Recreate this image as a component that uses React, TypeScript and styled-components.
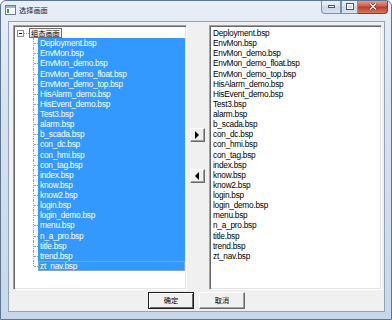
import React from "react";
import styled, { createGlobalStyle } from "styled-components";

const ROW = 10.13;

const files = [
  "Deployment.bsp",
  "EnvMon.bsp",
  "EnvMon_demo.bsp",
  "EnvMon_demo_float.bsp",
  "EnvMon_demo_top.bsp",
  "HisAlarm_demo.bsp",
  "HisEvent_demo.bsp",
  "Test3.bsp",
  "alarm.bsp",
  "b_scada.bsp",
  "con_dc.bsp",
  "con_hmi.bsp",
  "con_tag.bsp",
  "index.bsp",
  "know.bsp",
  "know2.bsp",
  "login.bsp",
  "login_demo.bsp",
  "menu.bsp",
  "n_a_pro.bsp",
  "title.bsp",
  "trend.bsp",
  "zt_nav.bsp",
];

const GlobalStyle = createGlobalStyle`
  html, body {
    margin: 0;
    padding: 0;
    background: #ffffff;
  }
  body {
    font-family: "Liberation Sans", "Noto Sans CJK SC", sans-serif;
  }
`;

const Window = styled.div`
  width: 392px;
  height: 320px;
  box-sizing: border-box;
  border: 1px solid #5d7693;
  border-radius: 6px 6px 0 0;
  background: linear-gradient(180deg, #e8eef6 0%, #d9e3ef 30%, #c8d7ea 100%);
  display: flex;
  flex-direction: column;
  overflow: hidden;
`;

const TitleBar = styled.div`
  height: 20px;
  display: flex;
  align-items: flex-start;
  padding-left: 4px;
`;

const TitleIcon = styled.svg`
  margin-top: 4px;
  flex: none;
`;

const TitleText = styled.span`
  margin-left: 3px;
  margin-top: 4px;
  font-family: "Noto Sans CJK SC", sans-serif;
  font-size: 7.2px;
  line-height: 10px;
  color: #1e1e1e;
`;

const Spacer = styled.div`
  flex: 1;
`;

const WinButtons = styled.div`
  display: flex;
  margin-right: 3px;
  margin-top: -1px;
`;

const WinButton = styled.div<{ $close?: boolean; $w: number }>`
  width: ${(p) => p.$w}px;
  height: 14px;
  box-sizing: border-box;
  border: 1px solid ${(p) => (p.$close ? "#8a3a30" : "#7d8fa6")};
  border-top: none;
  border-left-width: ${(p) => (p.$close ? 0 : 1)}px;
  background: ${(p) =>
    p.$close
      ? "linear-gradient(180deg, #e8a89a 0%, #d4604b 45%, #c0392b 55%, #d67a60 100%)"
      : "linear-gradient(180deg, #eef3f9 0%, #dbe4ef 45%, #cbd7e6 55%, #d9e3ef 100%)"};
  border-radius: ${(p) => (p.$close ? "0 0 4px 0" : "0")};
  display: flex;
  align-items: center;
  justify-content: center;
  &:first-child {
    border-radius: 0 0 0 4px;
  }
`;

const Client = styled.div`
  flex: 1;
  margin: 0 6px 7px 7px;
  background: #f0f0f0;
  border: 1px solid #8fa3bb;
  display: flex;
  flex-direction: column;
  padding: 3px 2px 0 4px;
`;

const MainRow = styled.div`
  display: flex;
  height: 265px;
  gap: 3px;
`;

const Sunken = styled.div`
  background: #ffffff;
  box-sizing: border-box;
  border: 1px solid;
  border-color: #a0a0a0 #ffffff #ffffff #a0a0a0;
  box-shadow: inset 1px 1px 0 #696969, inset -1px -1px 0 #e3e3e3;
  padding: 2px 1px 1px 2px;
  font-size: 8.3px;
  letter-spacing: -0.25px;
  color: #000;
  overflow: hidden;
`;

const TreeBox = styled(Sunken)`
  width: 174px;
  flex: none;
`;

const ListBox = styled(Sunken)`
  flex: 1;
  margin-left: 1px;
  padding-left: 3px;
`;

const Row = styled.div`
  height: ${ROW}px;
  line-height: ${ROW}px;
  display: flex;
  align-items: stretch;
  white-space: nowrap;
`;

const RootRow = styled(Row)`
  align-items: center;
`;

const ExpandBox = styled.div`
  width: 7px;
  height: 7px;
  box-sizing: border-box;
  border: 1px solid #919191;
  background: #fff;
  margin-left: 1px;
  position: relative;
  &::after {
    content: "";
    position: absolute;
    left: 1px;
    right: 1px;
    top: 2px;
    border-top: 1px solid #000;
  }
`;

const RootStub = styled.div`
  width: 5px;
  border-top: 1px dotted #a0a0a0;
`;

const RootLabel = styled.span`
  font-family: "Noto Sans CJK SC", sans-serif;
  font-size: 7.2px;
  letter-spacing: 0;
  line-height: 8px;
  padding: 0 1px;
  border: 1px solid #6e6e6e;
  background: #f4f4f4;
  color: #000;
`;

const Gutter = styled.div<{ $last?: boolean }>`
  width: 22px;
  flex: none;
  position: relative;
  &::before {
    content: "";
    position: absolute;
    left: 17px;
    top: 0;
    bottom: ${(p) => (p.$last ? "50%" : "0")};
    border-left: 1px dotted #a0a0a0;
  }
  &::after {
    content: "";
    position: absolute;
    left: 18px;
    right: 0;
    top: 50%;
    border-top: 1px dotted #a0a0a0;
  }
`;

const ItemLabel = styled.div<{ $focus?: boolean }>`
  flex: 1;
  background: #3399ff;
  color: #ffffff;
  padding-left: 2px;
  box-sizing: border-box;
  outline: ${(p) => (p.$focus ? "1px solid #7fa7cf" : "none")};
  outline-offset: -1px;
`;

const ListItem = styled.div`
  height: ${ROW}px;
  line-height: ${ROW}px;
  white-space: nowrap;
`;

const ArrowColumn = styled.div`
  width: 15px;
  flex: none;
  display: flex;
  flex-direction: column;
  padding-top: 103px;
  gap: 27px;
`;

const ArrowButton = styled.div`
  width: 15px;
  height: 14px;
  box-sizing: border-box;
  background: #f0f0f0;
  border: 1px solid;
  border-color: #ffffff #696969 #696969 #ffffff;
  box-shadow: inset -1px -1px 0 #a0a0a0;
  display: flex;
  align-items: center;
  justify-content: center;
`;

const Footer = styled.div`
  display: flex;
  justify-content: center;
  gap: 5px;
  padding-top: 2px;
  padding-right: 2px;
`;

const DialogButton = styled.div<{ $default?: boolean }>`
  width: 46px;
  height: 17px;
  box-sizing: border-box;
  background: #f0f0f0;
  border: 1px solid;
  border-color: ${(p) =>
    p.$default ? "#1e1e1e" : "#ffffff #696969 #696969 #ffffff"};
  box-shadow: ${(p) =>
    p.$default
      ? "inset 1px 1px 0 #ffffff, inset -1px -1px 0 #696969"
      : "inset -1px -1px 0 #a0a0a0"};
  font-family: "Noto Sans CJK SC", sans-serif;
  font-size: 7.2px;
  line-height: 15px;
  text-align: center;
  color: #000;
`;

function Triangle({ dir }: { dir: "right" | "left" }) {
  return (
    <svg width="5" height="8" viewBox="0 0 5 8">
      {dir === "right" ? (
        <polygon points="0,0 4,4 0,8" fill="#000" />
      ) : (
        <polygon points="4,0 0,4 4,8" fill="#000" />
      )}
    </svg>
  );
}

export default function App() {
  return (
    <>
      <GlobalStyle />
      <Window>
        <TitleBar>
          <TitleIcon width="11" height="10" viewBox="0 0 11 10">
            <rect x="0.5" y="0.5" width="10" height="9" fill="#fff" stroke="#6d7a88" />
            <rect x="1" y="1" width="9" height="2" fill="#9db4cf" />
            <rect x="2" y="4" width="2" height="4" fill="#5c8c5a" />
          </TitleIcon>
          <TitleText>选择画面</TitleText>
          <Spacer />
          <WinButtons>
            <WinButton $w={20}>
              <svg width="7" height="3" viewBox="0 0 7 3">
                <rect x="0.5" y="0.5" width="6" height="2" fill="#fff" stroke="#4a5a6e" />
              </svg>
            </WinButton>
            <WinButton $w={17}>
              <svg width="8" height="7" viewBox="0 0 8 7">
                <rect x="0.5" y="0.5" width="7" height="6" fill="none" stroke="#4a5a6e" />
                <rect x="1.5" y="1.5" width="5" height="4" fill="none" stroke="#fff" />
              </svg>
            </WinButton>
            <WinButton $w={30} $close>
              <svg width="8" height="7" viewBox="0 0 8 7">
                <path d="M1 0.5 L7 6.5 M7 0.5 L1 6.5" stroke="#5a1a12" strokeWidth="2.4" />
                <path d="M1 0.5 L7 6.5 M7 0.5 L1 6.5" stroke="#fff" strokeWidth="1.3" />
              </svg>
            </WinButton>
          </WinButtons>
        </TitleBar>
        <Client>
          <MainRow>
            <TreeBox>
              <RootRow>
                <ExpandBox />
                <RootStub />
                <RootLabel>组态画面</RootLabel>
              </RootRow>
              {files.map((f, i) => (
                <Row key={f}>
                  <Gutter $last={i === files.length - 1} />
                  <ItemLabel $focus={i === files.length - 1}>{f}</ItemLabel>
                </Row>
              ))}
            </TreeBox>
            <ArrowColumn>
              <ArrowButton>
                <Triangle dir="right" />
              </ArrowButton>
              <ArrowButton>
                <Triangle dir="left" />
              </ArrowButton>
            </ArrowColumn>
            <ListBox>
              {files.map((f) => (
                <ListItem key={f}>{f}</ListItem>
              ))}
            </ListBox>
          </MainRow>
          <Footer>
            <DialogButton $default>确定</DialogButton>
            <DialogButton>取消</DialogButton>
          </Footer>
        </Client>
      </Window>
    </>
  );
}
